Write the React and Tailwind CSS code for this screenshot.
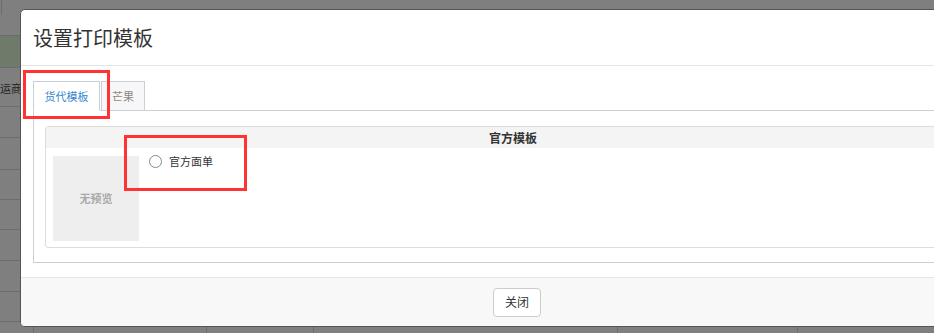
import React from 'react';

const font = { fontFamily: '"Noto Sans CJK SC", "Noto Sans", sans-serif' };

// 背景页面（被遮罩盖住的表格）
const BgRow = ({ h, green, children }) => (
  <div className={`flex border-b border-[#6c6c6c] ${green ? 'bg-[#6f7b6a]' : ''}`} style={{ height: h }}>
    <div className="w-[34px] border-r border-[#6c6c6c] relative overflow-visible">{children}</div>
    <div className="w-[173px] border-r border-[#6c6c6c]"></div>
    <div className="w-[107px] border-r border-[#6c6c6c]"></div>
    <div className="w-[304px] border-r border-[#6c6c6c]"></div>
    <div className="w-[180px] border-r border-[#6c6c6c]"></div>
    <div className="flex-1"></div>
  </div>
);

const Background = () => (
  <div className="flex flex-col">
    <div className="h-[36px] flex border-b border-[#6c6c6c]">
      <div className="w-[2px] h-[15px] border-r border-[#6c6c6c]"></div>
    </div>
    <BgRow h={32} green />
    <BgRow h={39}>
      <span className="absolute left-0 top-[15px] text-[11px] leading-none text-[#1e1e1e] whitespace-nowrap">运商</span>
    </BgRow>
    <BgRow h={31} />
    <BgRow h={32} />
    <BgRow h={30} />
    <BgRow h={30} />
    <BgRow h={31} />
    <BgRow h={31} />
    <BgRow h={30} />
    <BgRow h={30} />
  </div>
);

const PrintTemplateDialog = () => (
  <div className="absolute left-[20px] top-[9px] w-[994px] h-[318px] bg-white border border-[#555] rounded-[5px] flex flex-col overflow-hidden">
    {/* Header */}
    <div className="h-[56px] border-b border-[#e5e5e5] px-[12px] flex items-center shrink-0">
      <h4 className="text-[20px] text-[#333] leading-none">设置打印模板</h4>
    </div>

    {/* Body */}
    <div className="flex-1 px-[12px] pt-[15px] pb-[14px] flex flex-col">
      <div className="flex h-[30px] border-b border-[#c9d0d8]">
        <div className="w-[67px] h-[30px] border border-[#c9d0d8] border-b-white bg-white flex items-center justify-center text-[11px] text-[#3a87d0]">
          货代模板
        </div>
        <div className="w-[44px] h-[29px] ml-px border border-[#c9d0d8] border-b-0 bg-[#f7f7f7] flex items-center justify-center text-[11px] text-[#8a8a8a]">
          芒果
        </div>
      </div>
      <div className="flex-1 border-x border-b border-[#c9d0d8] pt-[15px] pb-[14px] px-[11px]">
        <div className="h-full border border-[#ddd] rounded-[3px] flex flex-col">
          <div className="h-[21px] bg-[#f4f4f4] flex items-center justify-center text-[12px] font-bold text-[#333] shrink-0 pr-[8px]">
            官方模板
          </div>
          <div className="flex px-[7px] pt-[8px]">
            <div className="w-[86px] h-[85px] bg-[#eeeeee] flex items-center justify-center text-[11px] font-bold text-[#aaa]">
              无预览
            </div>
            <label className="ml-[10px] flex items-center h-[12px] mt-[-1px] text-[11px] text-[#333]">
              <span className="w-[13px] h-[13px] rounded-full border border-[#888] bg-white"></span>
              <span className="ml-[7px]">官方面单</span>
            </label>
          </div>
        </div>
      </div>
    </div>

    {/* Footer */}
    <div className="h-[49px] border-t border-[#e5e5e5] bg-[#f8f8f8] flex items-center justify-center shrink-0">
      <button className="w-[48px] h-[29px] bg-white border border-[#ccc] rounded-[4px] text-[12px] text-[#333]">
        关闭
      </button>
    </div>
  </div>
);

const App = () => {
  return (
    <div className="relative w-[934px] h-[333px] overflow-hidden bg-[#7f7f7f]" style={font}>
      <Background />
      <PrintTemplateDialog />

      {/* 标注框 */}
      <div className="absolute left-[23px] top-[70px] w-[87px] h-[49px] border-[3px] border-[#f33]"></div>
      <div className="absolute left-[124px] top-[135px] w-[123px] h-[56px] border-[3px] border-[#f33]"></div>
    </div>
  );
};

export default App;
